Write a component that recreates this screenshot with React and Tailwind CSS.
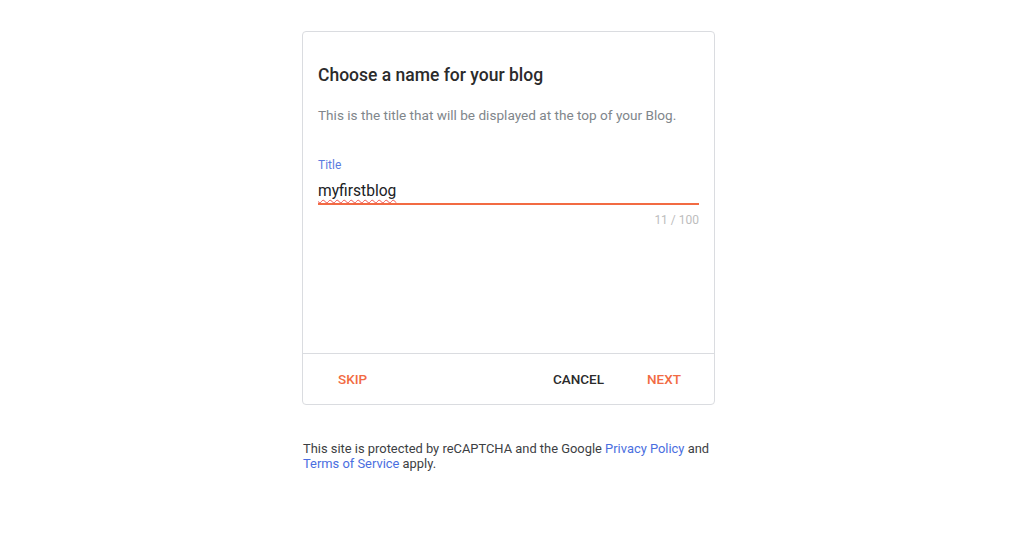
import React from "react";

const App = () => {
  return (
    <div className="min-h-screen bg-white font-['Roboto',sans-serif] pt-[31px]">
      <div className="ml-[302px] w-[413px]">
        <div className="rounded border border-[#dadce0] bg-white">
          <div className="h-[321px] px-[15px] pt-[31px]">
            <h1 className="text-[17.5px] leading-6 font-medium text-[#2b2b2b]">Choose a name for your blog</h1>
            <p className="mt-[18px] text-[13.6px] leading-5 text-[#80868b]">
              This is the title that will be displayed at the top of your Blog.
            </p>

            <div className="mt-[32px]">
              <label className="block text-[12px] leading-4 text-[#5b7ce0]">Title</label>
              <div className="mt-[6px] border-b-2 border-[#f26b43] text-[15.6px] leading-6 text-[#202124]">
                <span className="underline decoration-wavy decoration-[#ef5350] decoration-1 underline-offset-[3px]">myfirstblog</span>
              </div>
              <div className="mt-[7px] text-right text-[12px] leading-4 text-[#bdbdbd]">11 / 100</div>
            </div>
          </div>

          <div className="flex h-[51px] items-center border-t border-[#dadce0] pl-[35px] pr-[33px] pt-px text-[13.5px] font-medium">
            <button className="uppercase text-[#f26b43]">SKIP</button>
            <div className="ml-auto flex gap-[43px]">
              <button className="uppercase text-[#2b2b2b]">CANCEL</button>
              <button className="uppercase text-[#f26b43]">NEXT</button>
            </div>
          </div>
        </div>

        <p className="ml-[1px] mt-[36px] text-[12.9px] leading-[15px] text-[#3c4043]">
          This site is protected by reCAPTCHA and the Google{" "}
          <a className="text-[#4a6ee0]">Privacy Policy</a> and{" "}
          <a className="text-[#4a6ee0]">Terms of Service</a> apply.
        </p>
      </div>
    </div>
  );
};

export default App;
